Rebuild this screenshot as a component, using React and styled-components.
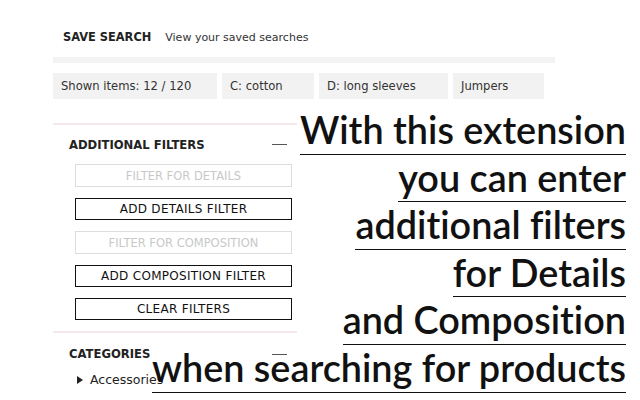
import React from 'react';
import styled, { createGlobalStyle } from 'styled-components';

const Global = createGlobalStyle`
  html, body {
    margin: 0;
    background: #fff;
  }
  body {
    font-family: 'DejaVu Sans', sans-serif;
    color: #222;
  }
`;

const Page = styled.div`
  position: relative;
  width: 640px;
  height: 400px;
  overflow: hidden;
  padding: 30px 0 0 53px;
  box-sizing: border-box;
`;

const SaveRow = styled.div`
  display: flex;
  align-items: baseline;
  gap: 14px;
  padding-left: 10px;
  height: 19px;
`;

const SaveTitle = styled.span`
  font-size: 11.4px;
  font-weight: 700;
  color: #222;
`;

const SaveLink = styled.span`
  font-size: 11px;
  color: #333;
`;

const GreyBar = styled.div`
  width: 502px;
  height: 6px;
  margin-top: 8px;
  background: #f3f3f3;
`;

const Chips = styled.div`
  display: flex;
  gap: 5px;
  margin-top: 10px;
`;

const Chip = styled.div`
  width: ${(p) => p.w}px;
  height: 26px;
  box-sizing: border-box;
  padding-left: 8px;
  display: flex;
  align-items: center;
  background: #f2f2f2;
  font-size: 11.6px;
  color: #333;
  white-space: nowrap;
`;

const Sidebar = styled.div`
  width: 244px;
  margin-top: 24px;
`;

const Divider = styled.div`
  height: 2px;
  background: #f4e8ec;
`;

const SectionHead = styled.div`
  display: flex;
  align-items: center;
  justify-content: space-between;
  box-sizing: border-box;
  padding: ${(p) => p.pt || 0}px 10px 0 16px;
  height: ${(p) => p.h}px;
`;

const SectionTitle = styled.span`
  font-size: 11.6px;
  font-weight: 700;
  color: #222;
`;

const Minus = styled.span`
  width: 15px;
  height: 1px;
  background: #555;
`;

const Controls = styled.div`
  display: flex;
  flex-direction: column;
  gap: 11px;
  padding: 0 5px 11px 22px;
`;

const FilterInput = styled.input`
  height: 23px;
  box-sizing: border-box;
  border: 1px solid #ddd;
  background: #fff;
  font-family: 'DejaVu Sans', sans-serif;
  font-size: 11.5px;
  text-align: center;
  padding: 0;
  outline: none;
  &::placeholder {
    color: #c8c8c8;
  }
`;

const FilterButton = styled.button`
  height: 22px;
  box-sizing: border-box;
  border: 1px solid #111;
  background: #fff;
  font-family: 'DejaVu Sans', sans-serif;
  font-size: 12px;
  letter-spacing: 0.3px;
  color: #111;
  padding: 0;
`;

const CatItem = styled.div`
  display: flex;
  align-items: center;
  gap: 7px;
  padding-left: 24px;
  font-size: 12.5px;
  color: #222;
`;

const Arrow = styled.span`
  width: 0;
  height: 0;
  border-top: 4px solid transparent;
  border-bottom: 4px solid transparent;
  border-left: 6px solid #222;
`;

const Caption = styled.div`
  position: absolute;
  top: 107px;
  right: 14px;
  display: flex;
  flex-direction: column;
  align-items: flex-end;
  font-family: 'Lato', sans-serif;
  font-weight: 600;
  font-size: 37.8px;
  font-variant-ligatures: none;
  color: #111;
`;

const CaptionLine = styled.span`
  display: block;
  height: 46.6px;
  line-height: 46px;
  white-space: nowrap;
  border-bottom: 1.5px solid #111;
`;

const lines = [
  'With this extension',
  'you can enter',
  'additional filters',
  'for Details',
  'and Composition',
  'when searching for products',
];

export default function App() {
  return (
    <>
      <Global />
      <Page>
        <SaveRow>
          <SaveTitle>SAVE SEARCH</SaveTitle>
          <SaveLink>View your saved searches</SaveLink>
        </SaveRow>
        <GreyBar />
        <Chips>
          <Chip w={164}>Shown items: 12 / 120</Chip>
          <Chip w={92}>C: cotton</Chip>
          <Chip w={129}>D: long sleeves</Chip>
          <Chip w={91}>Jumpers</Chip>
        </Chips>
        <Sidebar>
          <Divider />
          <SectionHead h={39}>
            <SectionTitle>ADDITIONAL FILTERS</SectionTitle>
            <Minus />
          </SectionHead>
          <Controls>
            <FilterInput placeholder="FILTER FOR DETAILS" />
            <FilterButton>ADD DETAILS FILTER</FilterButton>
            <FilterInput placeholder="FILTER FOR COMPOSITION" />
            <FilterButton>ADD COMPOSITION FILTER</FilterButton>
            <FilterButton>CLEAR FILTERS</FilterButton>
          </Controls>
          <Divider />
          <SectionHead h={39} pt={3}>
            <SectionTitle>CATEGORIES</SectionTitle>
            <Minus />
          </SectionHead>
          <CatItem>
            <Arrow />
            Accessories
          </CatItem>
        </Sidebar>
        <Caption>
          {lines.map((l) => (
            <CaptionLine key={l}>{l}</CaptionLine>
          ))}
        </Caption>
      </Page>
    </>
  );
}
